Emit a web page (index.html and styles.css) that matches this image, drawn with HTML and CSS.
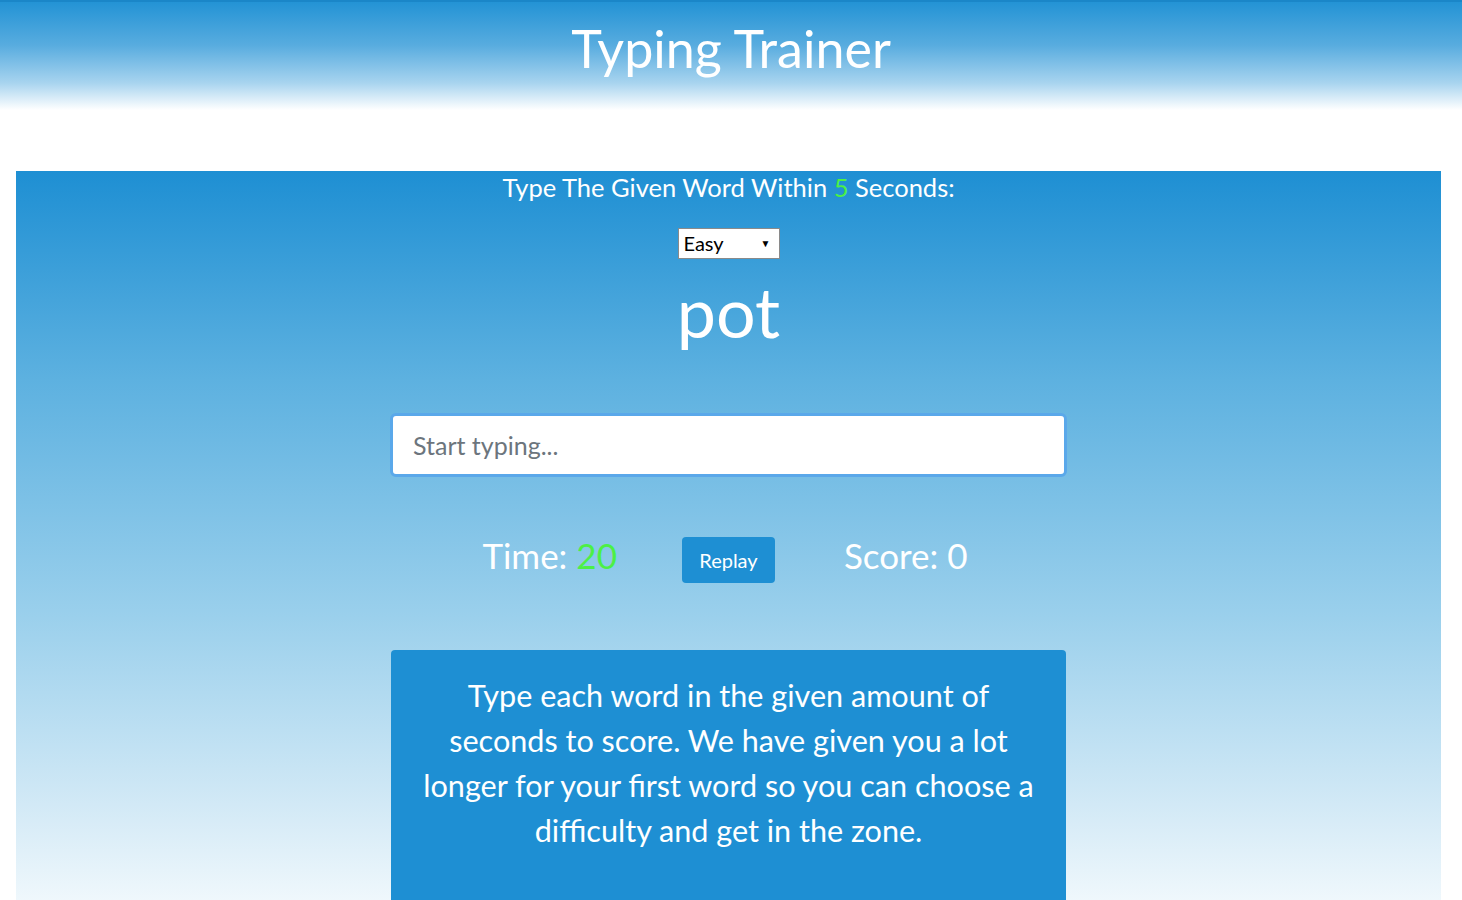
FILE: index.html
```html
<!DOCTYPE html>
<html lang="en">
<head>
<meta charset="utf-8">
<title>Typing Trainer</title>
<link rel="stylesheet" href="styles.css">
</head>
<body>
<header class="header">
  <h1 class="title">Typing Trainer</h1>
</header>
<main class="card">
  <p class="lead">Type The Given Word Within <span class="green">5</span> Seconds:</p>
  <span class="select-wrap">
    <select class="level">
      <option>Easy</option>
      <option>Medium</option>
      <option>Hard</option>
    </select>
  </span>
  <h2 class="word">pot</h2>
  <input class="entry" type="text" placeholder="Start typing..." autofocus>
  <div class="stats">
    <span class="stat">Time: <span class="green">20</span></span>
    <button class="replay">Replay</button>
    <span class="stat">Score: 0</span>
  </div>
  <div class="info">
    <p>Type each word in the given amount of seconds to score. We have given you a lot longer for your first word so you can choose a difficulty and get in the zone.</p>
  </div>
</main>
</body>
</html>
```
FILE: styles.css
```css
* { box-sizing: border-box; }
html, body { margin: 0; padding: 0; background: #fff; }
body { font-family: "Lato", "Open Sans", sans-serif; color: #fff; }

.header {
  height: 110px;
  border-top: 2px solid #1a86c8;
  background: linear-gradient(to bottom, #2393d5 0%, #58acdf 40%, #a8d4ef 75%, #ffffff 100%);
  display: flex;
  justify-content: center;
}
.title {
  margin: 17px 0 0;
  font-size: 52px;
  font-weight: 400;
  line-height: 58px;
  color: #fff;
}

.card {
  margin: 61px 21px 0 16px;
  height: 745px;
  background: linear-gradient(to bottom, #1e8fd3 0%, #5db1e0 28%, #9bd0ec 60%, #d2e9f6 85%, #f4fafd 100%);
  display: flex;
  flex-direction: column;
  align-items: center;
}
.lead {
  margin: 1px 0 0;
  font-size: 25.5px;
  line-height: 30px;
}
.green { color: #4cf046; }

.select-wrap {
  position: relative;
  margin-top: 26px;
  display: block;
}
.level {
  display: block;
  width: 102px;
  height: 31px;
  font-family: "Lato", sans-serif;
  font-size: 20px;
  color: #000;
  background: #fff;
  border: 1px solid #8a8a8a;
  border-radius: 0;
  padding: 0 5px 2px;
  -webkit-appearance: none;
  appearance: none;
}
.select-wrap::after {
  content: "\25BC";
  position: absolute;
  right: 9px;
  top: 9px;
  font-size: 10px;
  line-height: 12px;
  color: #000;
  pointer-events: none;
}
.word {
  margin: 12px 0 0;
  font-size: 70px;
  font-weight: 400;
  line-height: 80px;
}
.entry {
  margin-top: 62px;
  width: 677px;
  height: 64px;
  border: 3px solid #5aa8ea;
  border-radius: 6px;
  padding: 0 20px;
  font-family: "Lato", sans-serif;
  font-size: 25px;
  color: #333;
  outline: none;
}
.entry::placeholder { color: #6c757d; }
.stats {
  margin-top: 55px;
  margin-right: 7px;
  display: flex;
  align-items: center;
}
.stat {
  font-size: 35px;
  line-height: 46px;
  margin-bottom: 10px;
}
.replay {
  margin: 0 69px 0 65px;
  width: 93px;
  height: 46px;
  background: #1e8fd3;
  color: #fff;
  border: none;
  border-radius: 4px;
  font-family: "Lato", sans-serif;
  font-size: 20px;
}
.info {
  margin-top: 62px;
  width: 675px;
  flex: 1;
  background: #1e8fd3;
  border-radius: 4px;
  padding: 23px 22px;
  text-align: center;
}
.info p {
  margin: 0;
  font-size: 30.6px;
  line-height: 45px;
}
```
